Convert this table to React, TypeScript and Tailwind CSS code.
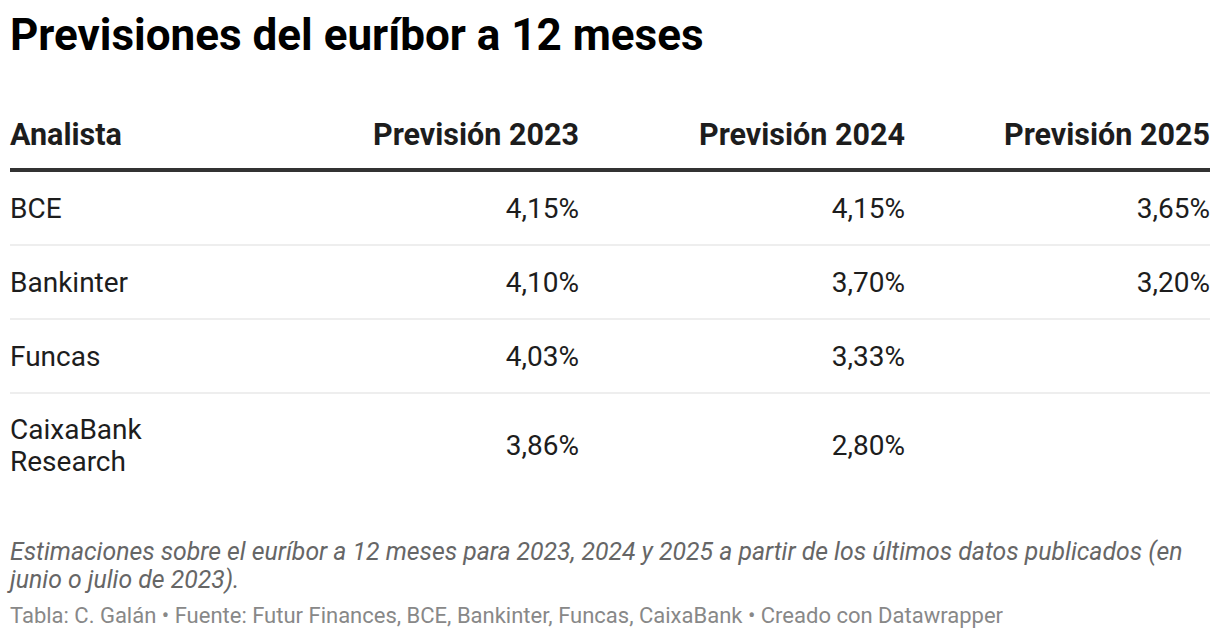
import React from "react";

const rows: [string, string, string, string][] = [
  ["BCE", "4,15%", "4,15%", "3,65%"],
  ["Bankinter", "4,10%", "3,70%", "3,20%"],
  ["Funcas", "4,03%", "3,33%", ""],
  ["CaixaBank Research", "3,86%", "2,80%", ""],
];

const grid = "grid grid-cols-[160px_409px_326px_305px]";

export default function App() {
  return (
    <div className="w-[1220px] h-[640px] bg-white px-[10px] pt-[9px] font-['Roboto',sans-serif] text-[#1d1d1d]">
      <h1 className="text-[44px] leading-[52px] font-bold text-[#000]">
        Previsiones del euríbor a 12 meses
      </h1>
      <div className="mt-[56px]">
        <div className={`${grid} items-center pb-[15px] border-b-[4px] border-[#333] text-[30.5px] leading-[36px] font-bold text-[#1d1d1d]`}>
          <div>Analista</div>
          <div className="text-right">Previsión 2023</div>
          <div className="text-right">Previsión 2024</div>
          <div className="text-right">Previsión 2025</div>
        </div>
        {rows.map((r, i) => (
          <div
            key={r[0]}
            className={`${grid} items-center text-[28px] leading-[32px] ${
              i < rows.length - 1
                ? "pt-[21px] pb-[19px] border-b-[2px] border-[#eeeeee]"
                : "pt-[20px] pb-[19px]"
            }`}
          >
            <div className="pr-[10px]">{r[0]}</div>
            <div className="text-right">{r[1]}</div>
            <div className="text-right">{r[2]}</div>
            <div className="text-right">{r[3]}</div>
          </div>
        ))}
      </div>
      <p className="mt-[41px] text-[24.8px] leading-[28px] italic text-[#666]">
        Estimaciones sobre el euríbor a 12 meses para 2023, 2024 y 2025 a partir de los últimos datos publicados (en junio o julio de 2023).
      </p>
      <p className="mt-[9px] text-[22px] leading-[26px] text-[#888]">
        Tabla: C. Galán • Fuente: Futur Finances, BCE, Bankinter, Funcas, CaixaBank • Creado con Datawrapper
      </p>
    </div>
  );
}
